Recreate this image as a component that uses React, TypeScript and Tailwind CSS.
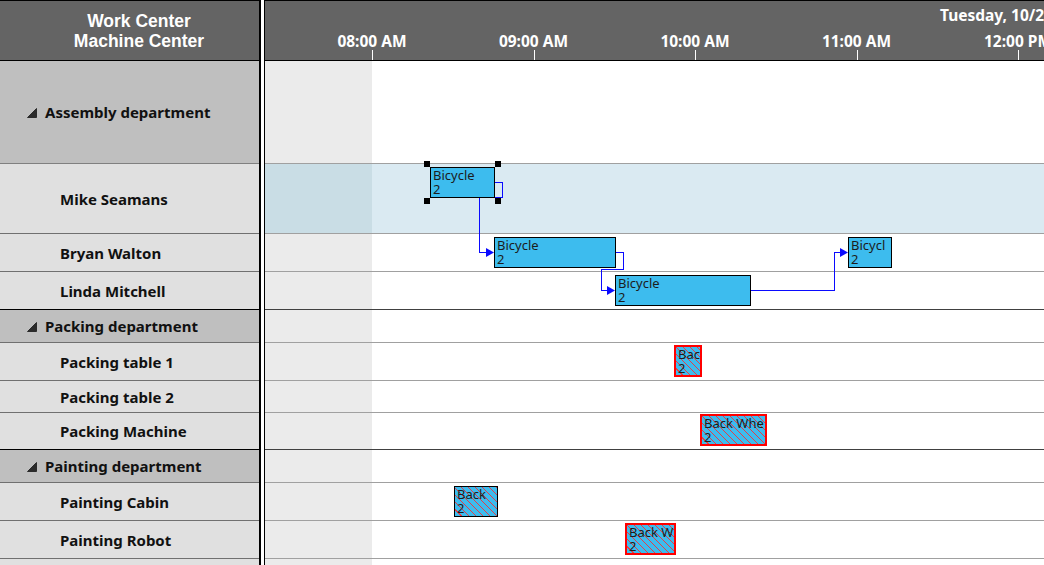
import clsx from "clsx";

type Row = {
  label: string;
  group?: boolean;
  h: string;
  leftLine: string;
  rightLine: string;
  selected?: boolean;
};

const rows: Row[] = [
  { label: "Assembly department", group: true, h: "h-[103px]", leftLine: "border-[#808080]", rightLine: "border-[#a0a0a0]" },
  { label: "Mike Seamans", h: "h-[70px]", leftLine: "border-[#707070]", rightLine: "border-[#a0a0a0]", selected: true },
  { label: "Bryan Walton", h: "h-[38px]", leftLine: "border-[#707070]", rightLine: "border-[#a0a0a0]" },
  { label: "Linda Mitchell", h: "h-[38px]", leftLine: "border-black", rightLine: "border-[#404040]" },
  { label: "Packing department", group: true, h: "h-[33px]", leftLine: "border-[#707070]", rightLine: "border-[#a0a0a0]" },
  { label: "Packing table 1", h: "h-[38px]", leftLine: "border-[#707070]", rightLine: "border-[#a0a0a0]" },
  { label: "Packing table 2", h: "h-[32px]", leftLine: "border-[#707070]", rightLine: "border-[#a0a0a0]" },
  { label: "Packing Machine", h: "h-[37px]", leftLine: "border-black", rightLine: "border-[#404040]" },
  { label: "Painting department", group: true, h: "h-[33px]", leftLine: "border-[#707070]", rightLine: "border-[#a0a0a0]" },
  { label: "Painting Cabin", h: "h-[38px]", leftLine: "border-[#707070]", rightLine: "border-[#a0a0a0]" },
  { label: "Painting Robot", h: "h-[38px]", leftLine: "border-[#707070]", rightLine: "border-[#a0a0a0]" },
  { label: "", h: "h-[38px]", leftLine: "border-[#707070]", rightLine: "border-[#a0a0a0]" },
];

// hour ticks, x relative to the chart panel
const hours = [
  { label: "08:00 AM", x: 107 },
  { label: "09:00 AM", x: 268.5 },
  { label: "10:00 AM", x: 430 },
  { label: "11:00 AM", x: 591.5 },
  { label: "12:00 PM", x: 753 },
];

type Task = {
  title: string;
  x: number;
  y: number;
  w: number;
  h: number;
  hatched?: boolean;
  red?: boolean;
};

// titles are trimmed per character, like the bars show them
const tasks: Task[] = [
  { title: "Bicycle", x: 165, y: 167, w: 65, h: 31 },
  { title: "Bicycle", x: 229, y: 237, w: 122, h: 31 },
  { title: "Bicycle", x: 350, y: 275, w: 136, h: 31 },
  { title: "Bicycl", x: 583, y: 237, w: 44, h: 31 },
  { title: "Bac", x: 409, y: 345, w: 28, h: 32, hatched: true, red: true },
  { title: "Back Whe", x: 435, y: 414, w: 67, h: 32, hatched: true, red: true },
  { title: "Back", x: 189, y: 486, w: 44, h: 31, hatched: true },
  { title: "Back W", x: 360, y: 523, w: 51, h: 32, hatched: true, red: true },
];

const handles = [
  [159, 161],
  [230, 161],
  [159, 198],
  [230, 198],
];

const links = [
  "229,182 237,182 237,197 214,197 214,252 222,252",
  "350,252 358,252 358,269 336,269 336,290 343,290",
  "485,290 569,290 569,252 576,252",
];

const arrows = [
  [229, 252],
  [350, 290],
  [583, 252],
];

function Expander() {
  return (
    <svg width="10" height="10" viewBox="0 0 10 10" className="shrink-0">
      <polygon points="9.5,0.5 9.5,9.5 0.5,9.5" fill="#2b2b2b" stroke="#2b2b2b" strokeWidth="1" />
    </svg>
  );
}

function TaskBox({ t }: { t: Task }) {
  return (
    <div
      className={clsx(
        "absolute overflow-hidden whitespace-nowrap pl-[2px] text-[13px] leading-[14px] text-[#1c1c1c]",
        t.red ? "border-2 border-[#ff0000]" : "border border-black",
        t.hatched
          ? "bg-[#3dbcee] bg-[image:repeating-linear-gradient(45deg,#3dbcee_0px,#3dbcee_4.2px,#e0404a_4.2px,#e0404a_5px)]"
          : "bg-[#3dbcee]"
      )}
      style={{ left: t.x, top: t.y, width: t.w, height: t.h }}
    >
      <div>{t.title}</div>
      <div>2</div>
    </div>
  );
}

export default function App() {
  return (
    <div className="flex h-[565px] w-[1044px] overflow-hidden bg-white font-['Noto_Sans',sans-serif]">
      {/* resource tree */}
      <div className="flex w-[261px] shrink-0 flex-col border-r-2 border-black">
        <div className="flex h-[61px] shrink-0 flex-col items-center justify-center border-t border-b border-black bg-[#646464] pl-[19px] font-['Liberation_Sans',Arial,sans-serif] text-[17.5px] font-bold leading-[20px] text-white">
          <div>Work Center</div>
          <div>Machine Center</div>
        </div>
        {rows.map((r, i) => (
          <div
            key={i}
            className={clsx(
              "flex shrink-0 items-center border-b pt-px text-[15px] font-bold text-[#111]",
              r.h,
              r.leftLine,
              r.group ? "gap-[8px] bg-[#bfbfbf] pl-[27px]" : "bg-[#e0e0e0] pl-[60px]"
            )}
          >
            {r.group && <Expander />}
            <span>{r.label}</span>
          </div>
        ))}
      </div>

      <div className="w-[3px] shrink-0 bg-white" />
      <div className="w-px shrink-0 bg-black" />

      {/* chart */}
      <div className="relative flex min-w-0 flex-1 flex-col">
        <div className="relative h-[61px] shrink-0 overflow-hidden border-t border-b border-black bg-[#646464] text-white">
          <div className="absolute left-[675px] top-[4px] whitespace-nowrap text-[15.5px] font-bold leading-[20px]">
            Tuesday, 10/23/2018
          </div>
          {hours.map((h) => (
            <div key={h.label}>
              <div
                className="absolute top-[30px] w-[100px] -translate-x-1/2 text-center text-[15.5px] font-bold leading-[20px] whitespace-nowrap"
                style={{ left: h.x }}
              >
                {h.label}
              </div>
              <div className="absolute top-[49px] h-[11px] w-px bg-white" style={{ left: h.x }} />
            </div>
          ))}
        </div>

        {rows.map((r, i) => (
          <div key={i} className={clsx("flex shrink-0 border-b", r.h, r.rightLine)}>
            <div className={clsx("w-[107px] shrink-0", r.selected ? "bg-[#c9dde5]" : "bg-[#ebebeb]")} />
            <div className={clsx("flex-1", r.selected ? "bg-[#daeaf2]" : "bg-white")} />
          </div>
        ))}

        {/* links, bars and selection */}
        <div className="pointer-events-none absolute inset-0">
          <svg className="absolute left-0 top-0" width="780" height="565">
            {links.map((p, i) => (
              <polyline key={i} points={p} fill="none" stroke="#0a0aff" strokeWidth="1" shapeRendering="crispEdges" />
            ))}
            {arrows.map(([x, y], i) => (
              <polygon key={i} points={`${x},${y + 0.5} ${x - 8},${y - 4} ${x - 8},${y + 5}`} fill="#0a0aff" />
            ))}
          </svg>
          {tasks.map((t, i) => (
            <TaskBox key={i} t={t} />
          ))}
          {handles.map(([x, y], i) => (
            <div key={i} className="absolute h-[6px] w-[6px] bg-black" style={{ left: x, top: y }} />
          ))}
        </div>
      </div>
    </div>
  );
}
